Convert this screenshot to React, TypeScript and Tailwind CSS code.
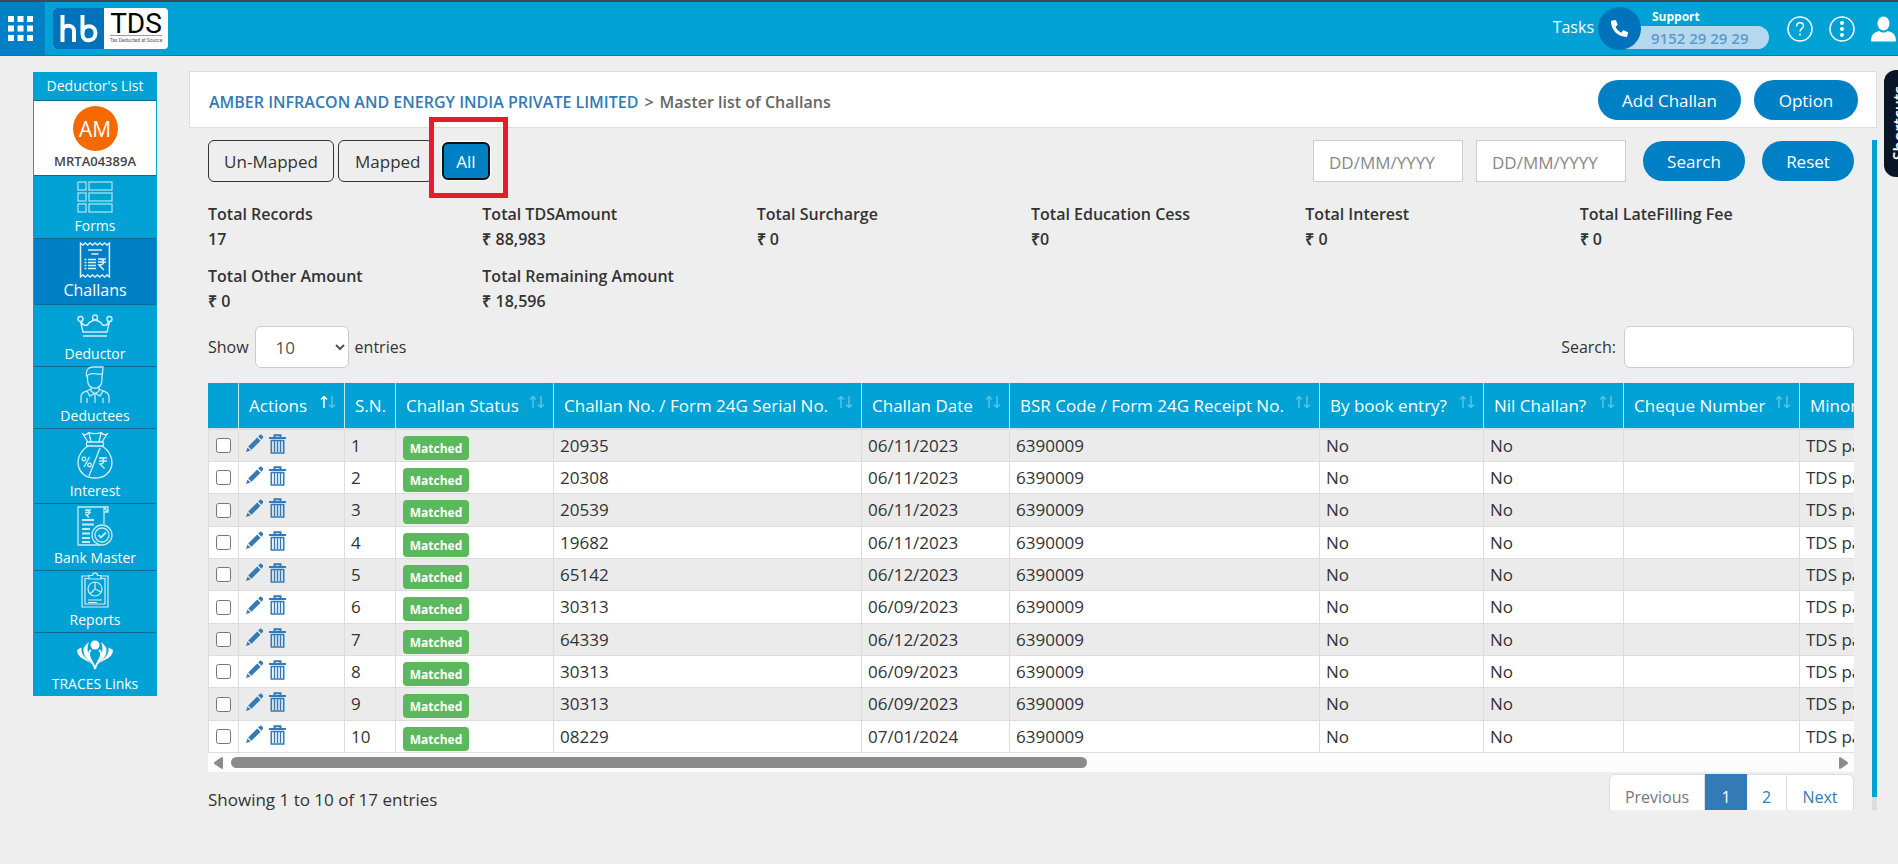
import type { ReactNode } from 'react';
import { FaPhone } from 'react-icons/fa';

const challans = [
  { no: '20935', date: '06/11/2023' },
  { no: '20308', date: '06/11/2023' },
  { no: '20539', date: '06/11/2023' },
  { no: '19682', date: '06/11/2023' },
  { no: '65142', date: '06/12/2023' },
  { no: '30313', date: '06/09/2023' },
  { no: '64339', date: '06/12/2023' },
  { no: '30313', date: '06/09/2023' },
  { no: '30313', date: '06/09/2023' },
  { no: '08229', date: '07/01/2024' },
];

const totals = [
  ['Total Records', '17'],
  ['Total TDSAmount', '₹ 88,983'],
  ['Total Surcharge', '₹ 0'],
  ['Total Education Cess', '₹0'],
  ['Total Interest', '₹ 0'],
  ['Total LateFilling Fee', '₹ 0'],
  ['Total Other Amount', '₹ 0'],
  ['Total Remaining Amount', '₹ 18,596'],
];

const columns = [
  { label: '', width: 'w-[31px]', sort: '' },
  { label: 'Actions', width: 'w-[106px]', sort: 'asc' },
  { label: 'S.N.', width: 'w-[51px]', sort: '' },
  { label: 'Challan Status', width: 'w-[158px]', sort: 'both' },
  { label: 'Challan No. / Form 24G Serial No.', width: 'w-[308px]', sort: 'both' },
  { label: 'Challan Date', width: 'w-[148px]', sort: 'both' },
  { label: 'BSR Code / Form 24G Receipt No.', width: 'w-[310px]', sort: 'both' },
  { label: 'By book entry?', width: 'w-[164px]', sort: 'both' },
  { label: 'Nil Challan?', width: 'w-[140px]', sort: 'both' },
  { label: 'Cheque Number', width: 'w-[176px]', sort: 'both' },
  { label: 'Minor Head', width: 'w-[149px]', sort: 'both' },
];

function FormsIcon() {
  return (
    <svg width="36" height="32" viewBox="0 0 36 32" fill="none" stroke="#b5e6f5" strokeWidth="1.2">
      {[1, 12, 23].map((y) => (
        <g key={y}>
          <rect x="1" y={y} width="8" height="8" />
          <rect x="12" y={y} width="23" height="8" />
        </g>
      ))}
    </svg>
  );
}

function ChallanIcon() {
  return (
    <svg width="32" height="36" viewBox="0 0 32 36" fill="none" stroke="#d9effa" strokeWidth="1.5">
      <path d="M1.5 1l2.4 2 2.4-2 2.4 2 2.4-2 2.4 2L16 1l2.4 2 2.4-2 2.4 2 2.4-2 2.4 2 2.4-2v34l-2.4-2-2.4 2-2.4-2-2.4 2-2.4-2L16 35l-2.5-2-2.4 2-2.4-2-2.4 2-2.4-2-2.4 2z" />
      <path d="M9 8h14M12.5 12h7M9 17.5h8M9 20.5h8M9 23.5h8M9 26.5h8" />
      <path d="M5.5 17.5h2M5.5 20.5h2M5.5 23.5h2M5.5 26.5h2" />
      <path d="M19 17h8M19 20h8M20 17c6 0 6 6 0 6l5 5" />
    </svg>
  );
}

function CrownIcon() {
  return (
    <svg width="36" height="24" viewBox="0 0 36 24" fill="none" stroke="#d0f0fa" strokeWidth="1.4">
      <circle cx="3.5" cy="5" r="2.5" />
      <circle cx="18" cy="3.5" r="2.5" />
      <circle cx="32.5" cy="5" r="2.5" />
      <path d="M3.5 7.5L6 18h24l2.5-10.5C29 13 25 12 24 8.5L18.8 6h-1.6L12 8.5C11 12 7 13 3.5 7.5zM6 22h24" />
    </svg>
  );
}

function PersonIcon() {
  return (
    <svg width="30" height="38" viewBox="0 0 30 38" fill="none" stroke="#c3ebf7" strokeWidth="1.3">
      <path d="M7 11C5 5 8 1 13 1h10c0 3-.5 6-1 10M8 9c5-3 9 0 14-1M7.5 9v5c0 11 14.5 11 14.5 0V8" />
      <path d="M11 20v5l4 3 4-3v-5M11 23l-4 2 3 5 5-3 5 3 3-5-4-2M7 25c-4 1-6 3-6 6v6M23 25c4 1 6 3 6 6v6M7 32v5M23 32v5M15 28v9" />
    </svg>
  );
}

function BagIcon() {
  return (
    <svg width="36" height="48" viewBox="0 0 36 48" fill="none" stroke="#d6f2fb" strokeWidth="1.3">
      <path d="M11 11L6 3c2 1 4 1 6-1.5 3 1.5 9 1.5 12 0C26 4 28 4 30 3l-5 8M14 11l-2-9M22 11l2-9" />
      <rect x="9.5" y="11" width="17" height="4" rx="1" />
      <path d="M11 15C-5 25-1 47 18 47s23-22 7-32M23 17L12 45" />
      <circle cx="7" cy="28" r="1.8" />
      <circle cx="12.5" cy="34" r="1.8" />
      <path d="M12.5 26L7 36M22 27h8M22 30h8M23 27c5 0 5 6 0 6l4.5 4.5" />
    </svg>
  );
}

function BankIcon() {
  return (
    <svg width="36" height="40" viewBox="0 0 36 40" fill="none" stroke="#c3ebf7" strokeWidth="1.3">
      <path d="M27 18V1H1v38h22M27 1h4v5h-4M27 1l4 5" />
      <path d="M8 4h6M8 6.5h6M9 4c4 0 4 5 0 5l3 2.5" />
      <path strokeWidth="2" d="M5 14h12M5 18.5h12M5 23h8M5 27.5h8M5 32h8M5 36h8" />
      <circle cx="25" cy="29" r="10" />
      <circle cx="25" cy="29" r="7" />
      <path strokeWidth="1.8" d="M21.5 29l2.5 2.5 5-5" />
    </svg>
  );
}

function ReportIcon() {
  return (
    <svg width="28" height="36" viewBox="0 0 28 36" fill="none" stroke="#d0f0fa" strokeWidth="1.2">
      <path d="M8 4H1v31h26V4h-7" />
      <path d="M8 6.5H4V32h20V6.5h-4M8 7V3.5h3.5c0-3.5 5-3.5 5 0H20V7z" />
      <circle cx="14" cy="17" r="7" />
      <path d="M14 10v7l6 3M14 17l-5 5M7 28h14M7 30.5h9" />
    </svg>
  );
}

function LotusIcon() {
  return (
    <svg width="36" height="30" viewBox="0 0 36 30" fill="none" stroke="white">
      <circle cx="18" cy="5" r="4.5" fill="white" stroke="none" />
      <path strokeWidth="1.8" d="M18 29c-1-6-5-8-6-14-.3-2 .5-4 2-5M18 29c1-6 5-8 6-14 .3-2-.5-4-2-5" />
      <path fill="white" stroke="none" d="M17 26C12 20 6 18 6.5 9c.2-2 2-4 5.5-7-4 10 1 14 5 24zM19 26c5-6 11-8 10.5-17-.2-2-2-4-5.5-7 4 10-1 14-5 24z" />
      <path fill="white" stroke="none" d="M14.5 24C9 19 1 19 0 10.5 1 9 3 8 4.5 7.5 3.5 16 10 18 14.5 24zM21.5 24c5.5-5 13.5-5 14.5-13.5-1-1.5-3-2.5-4.5-3 1 8.5-5.5 10.5-10 16.500z" />
    </svg>
  );
}

function MenuItem({ label, height, icon, active }: { label: string; height: string; icon: ReactNode; active?: boolean }) {
  return (
    <a
      href="#"
      className={`flex flex-col items-center justify-end border-b border-[#0c6b94] text-white last:border-b-0 ${height} ${active ? 'bg-[#0080c4] pb-0.5 text-base leading-6' : 'text-sm leading-6'}`}
    >
      <span className="flex flex-1 items-center pt-1">{icon}</span>
      {label}
    </a>
  );
}

function SortIcon({ sort }: { sort: string }) {
  return (
    <svg className="mt-3" width="16" height="14" viewBox="0 0 16 14" fill="none" stroke="white" strokeWidth="1.5">
      <path opacity={sort === 'asc' ? 1 : 0.35} d="M4 13V1.500M1 4.500l3-3 3 3" />
      <path opacity="0.35" d="M12 1v11.500M9 9.500l3 3 3-3" />
    </svg>
  );
}

function PencilIcon() {
  return (
    <svg width="19" height="19" viewBox="0 0 19 19" fill="#337ab7">
      <path d="M1 18l1.500-4.500 3 3zM3.200 12.500l9-9 3.300 3.300-9 9zM13.200 2.500L15 .8c1-1 4 2 3 3l-1.500 2z" />
    </svg>
  );
}

function TrashIcon() {
  return (
    <svg width="17" height="20" viewBox="0 0 17 20" fill="none" stroke="#337ab7">
      <path strokeWidth="2" d="M0 4h17M5.500 3.500V1.300h6v2.200" />
      <path strokeWidth="1.6" d="M2 6.500h13M2.300 6v13h12.400V6" />
      <path strokeWidth="1.4" d="M5.500 7v11M8.500 7v11M11.500 7v11" />
    </svg>
  );
}

function PillButton({ children, width }: { children: ReactNode; width: string }) {
  return <button className={`h-10 rounded-full bg-[#0080c4] pt-0.5 text-[17px] text-white ${width}`}>{children}</button>;
}

function Header() {
  return (
    <header className="flex h-14 items-stretch border-t-2 border-b border-t-[#404850] border-b-[#127a9e] bg-[#00a1d4] text-white">
      <button aria-label="Apps" className="flex w-[45px] items-center bg-[#0080c4] pl-2">
        <svg width="25" height="25" viewBox="0 0 25 25" fill="white">
          {[0, 9.5, 19].map((y) => [0, 9.5, 19].map((x) => <rect key={`${x}-${y}`} x={x} y={y} width="6" height="6" />))}
        </svg>
      </button>
      <a href="#" className="my-auto ml-2 flex h-[41px] w-[115px] overflow-hidden rounded-sm bg-white">
        <span className="flex w-[51px] items-center justify-center bg-[#0072bc]" aria-label="hb">
          <svg width="38" height="29" viewBox="0 0 38 29" fill="none" stroke="white" strokeWidth="4">
            <path d="M2.500 1v27M2.500 28V17c0-7 11.500-7 11.500 0v11M22.500 1v19c0 9 13 8 13-1s-13-9-13 0" />
          </svg>
        </span>
        <span className="flex flex-1 flex-col items-center text-black">
          <span className="mt-1 border-b border-[#6fa8d0] text-center font-[Roboto] text-[28px] leading-[23px]">TDS</span>
          <span className="font-[Roboto] text-[5px] leading-[9px] text-[#555]">Tax Deducted at Source</span>
        </span>
      </a>
      <div className="ml-auto flex items-center">
        <a href="#" className="mr-1 -mt-1 text-base">Tasks</a>
        <div className="flex items-center">
          <span className="z-10 flex size-[43px] items-center justify-center rounded-full bg-[#0072bc]">
            <FaPhone size={17} className="-scale-x-100" />
          </span>
          <div className="-ml-6 w-[152px]">
            <div className="pl-[35px] text-xs leading-[18px] font-bold">Support</div>
            <div className="h-[23px] rounded-full bg-[#b5d8ee] pt-px pl-[34px] text-[15px] leading-[23px] font-semibold text-[#5a9bcb]">9152 29 29 29</div>
          </div>
        </div>
        <button aria-label="Help" className="ml-[18px]">
          <svg width="26" height="26" viewBox="0 0 26 26" fill="none" stroke="white" strokeWidth="1.5">
            <circle cx="13" cy="13" r="12" />
            <path d="M9.500 10.500c0-5 7-5 7-.7 0 3-3.500 2.700-3.500 5.700M13 17.500v2" />
          </svg>
        </button>
        <button aria-label="More" className="ml-4">
          <svg width="26" height="26" viewBox="0 0 26 26" fill="white">
            <circle cx="13" cy="13" r="12" fill="none" stroke="white" strokeWidth="1.5" />
            <circle cx="13" cy="7" r="2" />
            <circle cx="13" cy="13" r="2" />
            <circle cx="13" cy="19" r="2" />
          </svg>
        </button>
        <button aria-label="Account" className="mr-0.5 ml-4">
          <svg width="25" height="26" viewBox="0 0 25 26" fill="white">
            <ellipse cx="12.5" cy="7.5" rx="6" ry="7" />
            <path d="M0 25.500c0-8 4-9.500 8.500-10.500 2 2 6 2 8 0 4.500 1 8.500 2.500 8.500 10.500z" />
          </svg>
        </button>
      </div>
    </header>
  );
}

function Sidebar() {
  return (
    <nav className="w-[124px] shrink-0 self-start border-x border-[#00a1d4] bg-[#00a1d4]">
      <div className="h-[29px] border-b border-[#0c6b94] text-center text-sm leading-7 text-white">Deductor's List</div>
      <div className="flex h-[75px] flex-col items-center border-b border-[#0c6b94] bg-white pt-[5px]">
        <span className="flex size-[45px] items-center justify-center rounded-full bg-[#f56a00] pt-0.5 text-[21px] text-white">AM</span>
        <span className="text-[13px] leading-[21px] font-semibold text-[#444]">MRTA04389A</span>
      </div>
      <MenuItem label="Forms" height="h-[63px]" icon={<FormsIcon />} />
      <MenuItem label="Challans" height="h-[66px]" icon={<ChallanIcon />} active />
      <MenuItem label="Deductor" height="h-[62px]" icon={<CrownIcon />} />
      <MenuItem label="Deductees" height="h-[62px]" icon={<PersonIcon />} />
      <MenuItem label="Interest" height="h-[75px]" icon={<BagIcon />} />
      <MenuItem label="Bank Master" height="h-[67px]" icon={<BankIcon />} />
      <MenuItem label="Reports" height="h-[62px]" icon={<ReportIcon />} />
      <MenuItem label="TRACES Links" height="h-[63px]" icon={<LotusIcon />} />
    </nav>
  );
}

function Filters() {
  return (
    <div className="flex h-[42px] items-center">
      <button className="h-full w-[126px] rounded-md border border-[#333] pt-0.5 text-[17px]">Un-Mapped</button>
      <button className="ml-1 h-full w-[95px] rounded-md border border-[#333] px-4 pt-0.5 text-left text-[17px]">Mapped</button>
      <div className="relative ml-[9px]">
        <button className="block h-[38px] w-12 rounded-md border-2 border-[#101010] bg-[#0080c4] pt-0.5 text-[17px] text-white ring-1 ring-white">All</button>
        <span className="pointer-events-none absolute -top-[25px] -right-[18px] -bottom-[18px] -left-[13px] border-[5px] border-[#e81c24]" />
      </div>
      <input aria-label="From date" placeholder="DD/MM/YYYY" className="ml-auto h-full w-[150px] border border-[#ccc] bg-white px-[15px] pt-0.5 text-[17px] placeholder:text-[#888]" />
      <input aria-label="To date" placeholder="DD/MM/YYYY" className="mr-[17px] ml-[13px] h-full w-[150px] border border-[#ccc] bg-white px-[15px] pt-0.5 text-[17px] placeholder:text-[#888]" />
      <PillButton width="w-[102px] mr-[17px]">Search</PillButton>
      <PillButton width="w-[92px]">Reset</PillButton>
    </div>
  );
}

function ChallanTable() {
  return (
    <div className="overflow-hidden">
      <table className="w-[1741px] table-fixed border-separate border-spacing-0 text-[17px]">
        <thead>
          <tr className="h-[47px] bg-[#00a1d4] text-white">
            {columns.map((col) => (
              <th key={col.label} className={`border-r border-b-2 border-r-[#c8e8f3] border-b-[#d5dfe4] p-0 font-normal ${col.width}`}>
                <div className="flex h-[45px] justify-between pr-2 pl-2.5 leading-[46px] whitespace-nowrap">
                  <span>{col.label}</span>
                  {col.sort && <SortIcon sort={col.sort} />}
                </div>
              </th>
            ))}
          </tr>
        </thead>
        <tbody>
          {challans.map((row, i) => (
            <tr key={i} className="h-8 odd:bg-[#ebebeb] even:bg-white nth-[3n]:h-[33px] [&>td]:border-r [&>td]:border-b [&>td]:border-[#ddd] [&>td]:py-0 [&>td]:leading-6">
              <td className="border-l pl-[7px]">
                <input type="checkbox" aria-label={`Select challan ${i + 1}`} className="block size-[15px]" />
              </td>
              <td className="pl-1.5">
                <div className="flex items-center gap-[5px] pb-1">
                  <button aria-label="Edit"><PencilIcon /></button>
                  <button aria-label="Delete"><TrashIcon /></button>
                </div>
              </td>
              <td className="pl-1.5">{i + 1}</td>
              <td className="pl-[7px]">
                <span className="mt-1 block h-6 w-[66px] rounded bg-[#5cb85c] text-center text-xs leading-[25px] font-bold text-white">Matched</span>
              </td>
              <td className="pl-1.5">{row.no}</td>
              <td className="pl-1.5">{row.date}</td>
              <td className="pl-1.5">6390009</td>
              <td className="pl-1.5">No</td>
              <td className="pl-1.5">No</td>
              <td />
              <td className="pl-1.5 whitespace-nowrap">TDS payable</td>
            </tr>
          ))}
        </tbody>
      </table>
      <div className="flex h-[19px] items-center justify-between bg-[#fcfcfc] px-1.5">
        <svg width="9" height="12" viewBox="0 0 9 12" fill="#8b8b8b"><path d="M9 1v10c0 1-1 1-2 .5L.5 7c-.7-.5-.7-1.500 0-2L7 .5C8 0 9 0 9 1z" /></svg>
        <div className="mx-2 flex-1">
          <div className="h-[11px] w-[53.5%] rounded-full bg-[#8b8b8b]" />
        </div>
        <svg width="9" height="12" viewBox="0 0 9 12" fill="#8b8b8b"><path d="M0 1v10c0 1 1 1 2 .5L8.500 7c.7-.5.7-1.500 0-2L2 .5C1 0 0 0 0 1z" /></svg>
      </div>
    </div>
  );
}

export default function App() {
  return (
    <div className="relative min-h-screen overflow-hidden bg-[#eee] font-['Open_Sans',sans-serif] text-[#333]">
      <Header />
      <div className="flex pr-[21px] pl-[33px]">
        <div className="flex pt-4"><Sidebar /></div>
        <main className="ml-8 min-w-0 flex-1 pt-[15px]">
          <div className="flex h-[57px] items-center border border-[#ddd] bg-white pr-[18px] pl-[19px]">
            <p className="flex gap-1.5 pt-1 text-base font-semibold text-[#666]">
              <a href="#" className="text-[#337ab7]">AMBER INFRACON AND ENERGY INDIA PRIVATE LIMITED</a>
              <span>&gt;</span>
              <span>Master list of Challans</span>
            </p>
            <div className="ml-auto flex gap-[13px]">
              <PillButton width="w-[143px]">Add Challan</PillButton>
              <PillButton width="w-[104px]">Option</PillButton>
            </div>
          </div>

          <div className="mt-3 flex">
            <div className="min-w-0 flex-1 pr-[18px] pl-[19px]">
              <Filters />
              <dl className="mt-5 grid grid-cols-6 gap-y-3 text-base leading-[25px] font-semibold">
                {totals.map(([label, value]) => (
                  <div key={label}>
                    <dt>{label}</dt>
                    <dd>{value}</dd>
                  </div>
                ))}
              </dl>
              <div className="mt-3 mb-[15px] flex h-[42px] items-center justify-between text-base">
                <label className="flex items-center gap-1.5">
                  Show
                  <select className="h-[42px] w-[94px] rounded-md border border-[#ccc] bg-white pl-4 text-[17px] text-[#555]">
                    <option>10</option>
                  </select>
                  entries
                </label>
                <label className="flex items-center gap-2">
                  Search:
                  <input type="search" className="h-[42px] w-[230px] rounded-md border border-[#ccc] bg-white px-3" />
                </label>
              </div>
              <ChallanTable />
              <div className="mt-0.5 flex h-9 justify-between overflow-hidden">
                <p className="pt-3.5 text-[17px] leading-6">Showing 1 to 10 of 17 entries</p>
                <div className="flex h-[45px] text-base text-[#337ab7]">
                  <button className="w-24 rounded-l-md border border-[#ddd] bg-white text-[#777]">Previous</button>
                  <button className="w-[42px] bg-[#337ab7] text-white">1</button>
                  <button className="w-[39px] border-y border-[#ddd] bg-white">2</button>
                  <button className="w-[68px] rounded-r-md border border-[#ddd] bg-white">Next</button>
                </div>
              </div>
            </div>
            <div className="flex w-[5px] flex-col bg-[#ddd] pb-[13px]">
              <div className="flex-1 bg-[#00a1d4]" />
            </div>
          </div>
        </main>
      </div>

      <button className="absolute top-[70px] -right-5 flex h-[107px] w-[34px] items-center justify-center rounded-xl bg-[#0a1628] text-base font-semibold text-white">
        <span className="mr-1 rotate-180 leading-5 [writing-mode:vertical-rl]">Shortcuts</span>
      </button>
    </div>
  );
}
